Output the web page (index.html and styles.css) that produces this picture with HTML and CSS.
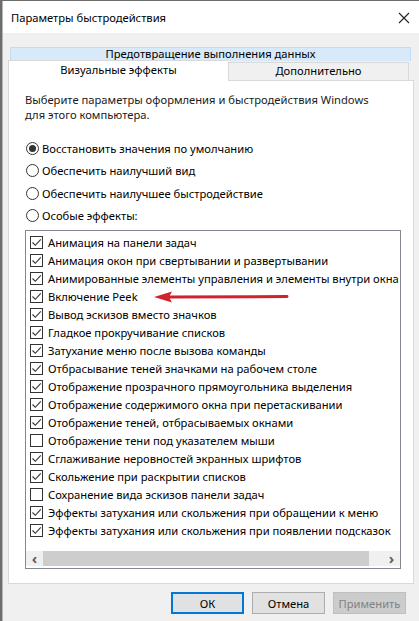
FILE: index.html
```html
<!DOCTYPE html>
<html lang="ru">
<head>
    <meta charset="UTF-8">
    <meta name="viewport" content="width=device-width, initial-scale=1.0">
    <title>Параметры быстродействия</title>
    <link rel="stylesheet" href="styles.css">
</head>
<body>
    <div class="window">
        <div class="titlebar">
            <span class="title">Параметры быстродействия</span>
            <svg class="close" width="12" height="12" viewBox="0 0 12 12">
                <path d="M1 1 L11 11 M11 1 L1 11" stroke="#222" stroke-width="1.1" fill="none"/>
            </svg>
        </div>

        <div class="content">
            <div class="tabs">
                <div class="tab-row back">
                    <div class="tab hover">Предотвращение выполнения данных</div>
                </div>
                <div class="tab-row front">
                    <div class="tab active">Визуальные эффекты</div>
                    <div class="tab">Дополнительно</div>
                </div>
            </div>

            <div class="panel">
                <p class="intro">Выберите параметры оформления и быстродействия Windows<br>для этого компьютера.</p>

                <div class="radios">
                    <label class="radio"><span class="dot checked"></span>Восстановить значения по умолчанию</label>
                    <label class="radio"><span class="dot"></span>Обеспечить наилучший вид</label>
                    <label class="radio"><span class="dot"></span>Обеспечить наилучшее быстродействие</label>
                    <label class="radio"><span class="dot"></span>Особые эффекты:</label>
                </div>

                <div class="listbox">
                    <div class="items" id="items"></div>
                    <div class="hscroll">
                        <span class="arrow">&#x2039;</span>
                        <span class="track"><span class="thumb"></span></span>
                        <span class="arrow">&#x203A;</span>
                    </div>
                    <svg class="pointer" width="140" height="12" viewBox="0 0 140 12">
                        <path d="M14 6 L134 5.5" stroke="#d3212d" stroke-width="3" stroke-linecap="round"/>
                        <path d="M1 6 L19 0.5 L16 6 L19 11.5 Z" fill="#d3212d"/>
                    </svg>
                </div>
            </div>

            <div class="buttons">
                <button class="btn default">ОК</button>
                <button class="btn">Отмена</button>
                <button class="btn disabled">Применить</button>
            </div>
        </div>
    </div>

    <script>
        const effects = [
            ['Анимация на панели задач', true],
            ['Анимация окон при свертывании и развертывании', true],
            ['Анимированные элементы управления и элементы внутри окна', true],
            ['Включение Peek', true],
            ['Вывод эскизов вместо значков', true],
            ['Гладкое прокручивание списков', true],
            ['Затухание меню после вызова команды', true],
            ['Отбрасывание теней значками на рабочем столе', true],
            ['Отображение прозрачного прямоугольника выделения', true],
            ['Отображение содержимого окна при перетаскивании', true],
            ['Отображение теней, отбрасываемых окнами', true],
            ['Отображение тени под указателем мыши', false],
            ['Сглаживание неровностей экранных шрифтов', true],
            ['Скольжение при раскрытии списков', true],
            ['Сохранение вида эскизов панели задач', false],
            ['Эффекты затухания или скольжения при обращении к меню', true],
            ['Эффекты затухания или скольжения при появлении подсказок', true]
        ];

        const tick = '<svg width="11" height="11" viewBox="0 0 11 11"><path d="M1.5 5.5 L4.3 8.3 L9.8 2.3" stroke="#333" stroke-width="1.1" fill="none"/></svg>';

        document.getElementById('items').innerHTML = effects.map(([name, on]) =>
            `<div class="item"><span class="box">${on ? tick : ''}</span>${name}</div>`
        ).join('');
    </script>
</body>
</html>
```

FILE: styles.css
```css
html, body {
    margin: 0;
    height: 100%;
}
body {
    font-family: "Noto Sans", "Open Sans", sans-serif;
    font-size: 11.2px;
    color: #000;
    background-color: #6d6d6d;
    overflow: hidden;
}
.window {
    margin: 1px 0 0 2px;
    height: 100%;
    background-color: #f0f0f0;
    border-left: 1px solid #b5b5b5;
}
.titlebar {
    height: 32px;
    background-color: #fff;
    display: flex;
    align-items: center;
    justify-content: space-between;
    padding: 0 9px 0 8px;
}
.title {
    color: #000;
}
.close {
    margin-top: 1px;
}
.content {
    padding: 14px 6px 0 5px;
}
.tabs {
    display: flex;
    flex-direction: column;
}
.tab-row {
    display: flex;
}
.tab-row.back {
    padding: 0 2px;
    height: 13px;
}
.tab-row.front {
    height: 20px;
}
.tab {
    flex: 1;
    text-align: center;
    box-sizing: border-box;
    border: 1px solid #d9d9d9;
    border-bottom: none;
    background-color: #f0f0f0;
    line-height: 14px;
    height: 18px;
    margin-top: 2px;
}
.tab-row.back .tab {
    height: 14px;
    margin-top: 0;
    line-height: 12px;
    background-color: #d8eaf9;
    border-color: #c4dcf1;
}
.tab.active {
    flex: 0 0 220px;
    margin-top: 0;
    height: 21px;
    background-color: #fff;
    line-height: 17px;
    position: relative;
    z-index: 1;
    border-right: none;
}
.tab-row.front .tab:last-child {
    flex: 0 0 181px;
    line-height: 15px;
}
.panel {
    height: 504px;
    box-sizing: border-box;
    background-color: #fff;
    border: 1px solid #d9d9d9;
    margin-right: -1px;
    padding: 11px 12px 0 16px;
}
.intro {
    margin: 0;
    line-height: 15px;
    color: #1a1a1a;
}
.radios {
    margin-top: 18px;
    display: flex;
    flex-direction: column;
    gap: 6px;
}
.radio {
    display: flex;
    align-items: center;
    height: 16.5px;
    gap: 3px;
}
.dot {
    width: 11px;
    height: 11px;
    border: 1px solid #333;
    border-radius: 50%;
    display: flex;
    align-items: center;
    justify-content: center;
    margin-left: 1px;
}
.dot.checked::after {
    content: "";
    width: 7px;
    height: 7px;
    border-radius: 50%;
    background-color: #333;
}
.listbox {
    position: relative;
    margin-top: 6px;
    height: 339px;
    box-sizing: border-box;
    border: 1px solid #828790;
    display: flex;
    flex-direction: column;
    justify-content: space-between;
}
.items {
    padding-top: 2px;
    overflow: hidden;
}
.item {
    display: flex;
    align-items: center;
    height: 18px;
    white-space: nowrap;
    padding-left: 4px;
    gap: 5px;
}
.box {
    flex: 0 0 auto;
    width: 11px;
    height: 11px;
    border: 1px solid #333;
    display: flex;
    align-items: center;
    justify-content: center;
}
.hscroll {
    display: flex;
    align-items: center;
    height: 15px;
    margin-bottom: 2px;
    background-color: #f0f0f0;
}
.arrow {
    width: 17px;
    text-align: center;
    font-size: 15px;
    line-height: 15px;
    color: #606060;
    font-weight: bold;
}
.track {
    flex: 1;
    height: 15px;
    display: flex;
}
.thumb {
    width: 326px;
    height: 15px;
    background-color: #cdcdcd;
}
.pointer {
    position: absolute;
    left: 127px;
    top: 60px;
}
.buttons {
    display: flex;
    justify-content: flex-end;
    gap: 8px;
    padding: 8px 7px 0 0;
}
.btn {
    width: 73px;
    height: 22px;
    font-family: inherit;
    font-size: 11.2px;
    background-color: #e1e1e1;
    border: 1px solid #adadad;
    color: #000;
    padding: 0;
}
.btn.default {
    border: 2px solid #0078d7;
}
.btn.disabled {
    background-color: #cccccc;
    border-color: #bfbfbf;
    color: #838383;
}
```
